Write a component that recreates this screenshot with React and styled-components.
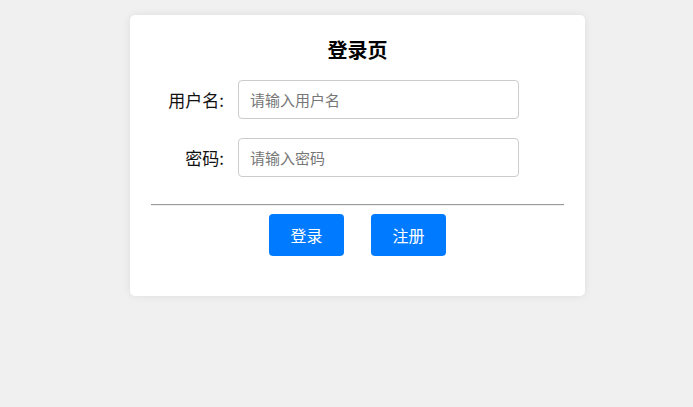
import React from 'react';
import styled, { createGlobalStyle } from 'styled-components';

const GlobalStyle = createGlobalStyle`
  html, body {
    margin: 0;
    padding: 0;
    background: #f0f0f0;
    font-family: "Noto Sans CJK SC", "Noto Sans", sans-serif;
  }
`;

const Page = styled.div`
  min-height: 407px;
  box-sizing: border-box;
  padding: 15px 0 0 130px;
  border-top: 2px solid #f6f6f6;
  margin-top: -2px;
`;

const Card = styled.div`
  width: 455px;
  box-sizing: border-box;
  padding: 20px 20px 40px;
  background: #fff;
  border-radius: 5px;
  box-shadow: 0 0 8px rgba(0, 0, 0, 0.08);
`;

const Title = styled.h2`
  margin: 0 0 15px;
  font-size: 20px;
  line-height: 30px;
  font-weight: bold;
  text-align: center;
  color: #000;
`;

const Form = styled.div`
  display: flex;
  flex-direction: column;
  gap: 19px;
`;

const Row = styled.div`
  display: grid;
  grid-template-columns: 74px 281px;
  column-gap: 14px;
  align-items: center;
`;

const Label = styled.label`
  text-align: right;
  font-size: 17px;
  color: #111;
`;

const Input = styled.input`
  height: 39px;
  box-sizing: border-box;
  padding: 0 11px;
  border: 1px solid #ccc;
  border-radius: 4px;
  font-family: inherit;
  font-size: 15px;
  outline: none;

  &::placeholder {
    color: #777;
  }
`;

const Divider = styled.hr`
  margin: 27px 1px 8px;
  border: 0;
  border-top: 1px solid #9a9a9a;
  border-bottom: 1px solid #eee;
`;

const Actions = styled.div`
  display: flex;
  justify-content: center;
  gap: 27px;
`;

const Button = styled.button`
  width: 75px;
  height: 42px;
  border: 0;
  border-radius: 4px;
  background: #007bff;
  color: #fff;
  font-family: inherit;
  font-size: 16px;
  cursor: pointer;
`;

const App = () => (
  <Page>
    <GlobalStyle />
    <Card>
      <Title>登录页</Title>
      <Form>
        <Row>
          <Label>用户名:</Label>
          <Input placeholder="请输入用户名" />
        </Row>
        <Row>
          <Label>密码:</Label>
          <Input type="password" placeholder="请输入密码" />
        </Row>
      </Form>
      <Divider />
      <Actions>
        <Button>登录</Button>
        <Button>注册</Button>
      </Actions>
    </Card>
  </Page>
);

export default App;
